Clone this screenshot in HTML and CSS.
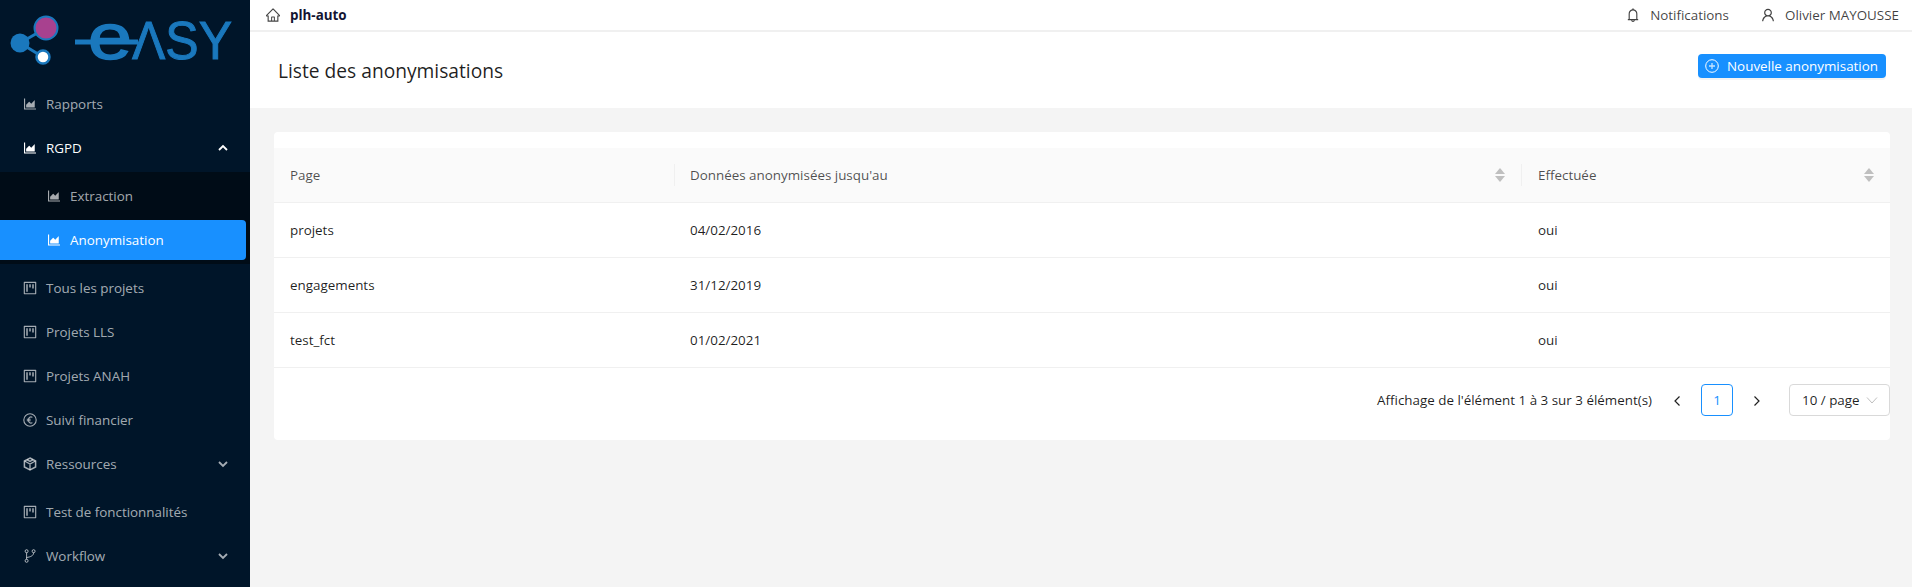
FILE: index.html
```html
<!DOCTYPE html>
<html lang="fr">
<head>
    <meta charset="UTF-8">
    <meta name="viewport" content="width=device-width, initial-scale=1.0">
    <title>Liste des anonymisations</title>
    <link rel="stylesheet" href="styles.css">
</head>
<body>
    <svg class="icon-defs" width="0" height="0">
        <symbol id="i-area" viewBox="64 64 896 896"><path d="M888 792H200V168c0-4.4-3.6-8-8-8h-56c-4.4 0-8 3.6-8 8v688c0 4.4 3.6 8 8 8h752c4.4 0 8-3.6 8-8v-56c0-4.4-3.6-8-8-8zm-616-64h536c4.4 0 8-3.6 8-8V284c0-7.2-8.7-10.7-13.7-5.7L592 488.6l-125.4-124a8.03 8.03 0 00-11.3 0l-189 189.6a7.87 7.87 0 00-2.3 5.6V720c0 4.4 3.6 8 8 8z"/></symbol>
        <symbol id="i-project" viewBox="64 64 896 896"><path d="M280 752h80c4.4 0 8-3.6 8-8V280c0-4.4-3.6-8-8-8h-80c-4.4 0-8 3.6-8 8v464c0 4.4 3.6 8 8 8zm192-280h80c4.4 0 8-3.6 8-8V280c0-4.4-3.6-8-8-8h-80c-4.4 0-8 3.6-8 8v184c0 4.4 3.6 8 8 8zm192 72h80c4.4 0 8-3.6 8-8V280c0-4.4-3.6-8-8-8h-80c-4.4 0-8 3.6-8 8v256c0 4.4 3.6 8 8 8zm216-432H144c-17.7 0-32 14.3-32 32v736c0 17.7 14.3 32 32 32h736c17.7 0 32-14.3 32-32V144c0-17.7-14.3-32-32-32zm-40 728H184V184h656v656z"/></symbol>
        <symbol id="i-chevron" viewBox="0 0 12 12"><path d="M2 4l4 4 4-4" fill="none" stroke="currentColor" stroke-width="1.8"/></symbol>
    </svg>

    <div class="layout">
        <!-- Menu -->
        <aside class="sider">
            <div class="logo">
                <svg width="250" height="80" viewBox="0 0 250 80">
                    <path d="M20 43L46 28M20 43L43 57" stroke="#1a78bd" stroke-width="3"/>
                    <circle cx="20" cy="43" r="9.5" fill="#1a78bd"/>
                    <circle cx="46" cy="28" r="11.5" fill="#a8418f" stroke="#1a78bd" stroke-width="2"/>
                    <circle cx="43" cy="57" r="6.5" fill="#fff" stroke="#1a78bd" stroke-width="2.5"/>
                    <text class="logo-text logo-e" x="88" y="59" textLength="44" lengthAdjust="spacingAndGlyphs">e</text>
                    <text class="logo-text" x="132" y="59" textLength="100" lengthAdjust="spacingAndGlyphs">ΛSY</text>
                    <path d="M75 42H138" stroke="#1a78bd" stroke-width="5"/>
                </svg>
            </div>
            <nav class="menu">
                <a class="menu-item"><svg class="icon"><use href="#i-area"/></svg>Rapports</a>
                <a class="menu-item is-open"><svg class="icon"><use href="#i-area"/></svg>RGPD<svg class="chevron up"><use href="#i-chevron"/></svg></a>
                <div class="submenu">
                    <a class="menu-item sub"><svg class="icon"><use href="#i-area"/></svg>Extraction</a>
                    <a class="menu-item sub is-active"><svg class="icon"><use href="#i-area"/></svg>Anonymisation</a>
                </div>
                <a class="menu-item"><svg class="icon"><use href="#i-project"/></svg>Tous les projets</a>
                <a class="menu-item"><svg class="icon"><use href="#i-project"/></svg>Projets LLS</a>
                <a class="menu-item"><svg class="icon"><use href="#i-project"/></svg>Projets ANAH</a>
                <a class="menu-item">
                    <svg class="icon" viewBox="0 0 14 14"><circle cx="7" cy="7" r="6.2" fill="none" stroke="currentColor" stroke-width="1.1"/><path d="M9.4 4.4C7.6 3.2 5.4 4.2 5.4 7s2.2 3.8 4 2.6M3.8 6.2h3.8M3.8 7.8h3.8" fill="none" stroke="currentColor" stroke-width="1.1"/></svg>
                    Suivi financier</a>
                <a class="menu-item">
                    <svg class="icon" viewBox="0 0 14 14"><path d="M7 1l5.6 3v6L7 13l-5.6-3V4z" fill="none" stroke="currentColor" stroke-width="1.5"/><path d="M1.6 4L7 7l5.4-3M7 7v6M4 2.6L7 4.4l3-1.8" fill="none" stroke="currentColor" stroke-width="1.3"/></svg>
                    Ressources<svg class="chevron"><use href="#i-chevron"/></svg></a>
                <a class="menu-item after-sub"><svg class="icon"><use href="#i-project"/></svg>Test de fonctionnalités</a>
                <a class="menu-item">
                    <svg class="icon" viewBox="0 0 14 14"><circle cx="3.6" cy="2.2" r="1.5" fill="none" stroke="currentColor"/><circle cx="3.6" cy="11.8" r="1.5" fill="none" stroke="currentColor"/><circle cx="10.6" cy="2.2" r="1.5" fill="none" stroke="currentColor"/><path d="M3.6 3.7v6.6M10.6 3.7c0 3.2-3.4 4.3-7 4.8" fill="none" stroke="currentColor"/></svg>
                    Workflow<svg class="chevron"><use href="#i-chevron"/></svg></a>
            </nav>
        </aside>

        <div class="main">
            <header class="topbar">
                <svg class="icon top-home" viewBox="64 64 896 896"><path d="M946.5 505L560.1 118.8l-25.9-25.9a31.5 31.5 0 00-44.4 0L77.5 505a63.9 63.9 0 00-18.8 46c.4 35.2 29.7 63.3 64.9 63.3h42.5V940h691.8V614.3h43.4c17.1 0 33.2-6.7 45.3-18.8a63.6 63.6 0 0018.7-45.3c0-17-6.7-33.1-18.8-45.2zM568 868H456V664h112v204zm217.9-325.7V868H632V640c0-22.1-17.9-40-40-40H432c-22.1 0-40 17.9-40 40v228H238.1V542.3h-96l370-369.7 23.1 23.1L882 542.3h-96.1z"/></svg>
                <strong class="app-name">plh-auto</strong>
                <div class="top-right">
                    <span class="top-link">
                        <svg class="icon" viewBox="64 64 896 896"><path d="M816 768h-24V428c0-141.1-104.3-257.7-240-277.1V112c0-22.1-17.9-40-40-40s-40 17.9-40 40v38.9c-135.7 19.4-240 136-240 277.1v340h-24c-17.7 0-32 14.3-32 32v32c0 4.4 3.6 8 8 8h216c0 61.8 50.2 112 112 112s112-50.2 112-112h216c4.4 0 8-3.6 8-8v-32c0-17.7-14.3-32-32-32zM512 888c-26.5 0-48-21.5-48-48h96c0 26.5-21.5 48-48 48zM304 768V428c0-55.6 21.6-107.8 60.9-147.1S456.4 220 512 220c55.6 0 107.8 21.6 147.1 60.9S720 372.4 720 428v340H304z"/></svg>
                        Notifications</span>
                    <span class="top-link">
                        <svg class="icon" viewBox="64 64 896 896"><path d="M858.5 763.6a374 374 0 00-80.6-119.5 375.63 375.63 0 00-119.5-80.6c-.4-.2-.8-.3-1.2-.5C719.5 518 760 444.7 760 362c0-137-111-248-248-248S264 225 264 362c0 82.7 40.5 156 102.8 201.1-.4.2-.8.3-1.2.5-44.8 18.9-85 46-119.5 80.6a375.63 375.63 0 00-80.6 119.5A371.7 371.7 0 00136 901.8a8 8 0 008 8.2h60c4.4 0 8-3.6 8-7.8 2-77.2 33-149.5 87.8-204.3 56.7-56.7 132-87.9 212.2-87.9s155.5 31.2 212.2 87.9C779 752.7 810 825 812 902.2c.1 4.4 3.6 7.8 8 7.8h60a8 8 0 008-8.2c-1-47.8-10.9-94.3-29.5-138.2zM512 534c-45.9 0-89.1-17.9-121.6-50.4S340 407.9 340 362c0-45.9 17.9-89.1 50.4-121.6S466.1 190 512 190s89.1 17.9 121.6 50.4S684 316.1 684 362c0 45.9-17.9 89.1-50.4 121.6S557.9 534 512 534z"/></svg>
                        Olivier MAYOUSSE</span>
                </div>
            </header>

            <div class="page-header">
                <h1>Liste des anonymisations</h1>
                <button class="btn-primary">
                    <svg class="icon" viewBox="0 0 14 14"><circle cx="7" cy="7" r="6.3" fill="none" stroke="currentColor" stroke-width="1"/><path d="M7 4v6M4 7h6" stroke="currentColor" stroke-width="1.3" opacity=".75"/></svg>
                    Nouvelle anonymisation
                </button>
            </div>

            <div class="content">
                <section class="card">
                    <table class="table">
                        <thead>
                            <tr>
                                <th class="col-page"><span class="th-label">Page</span></th>
                                <th class="col-date"><span class="th-label">Données anonymisées jusqu'au<span class="sorter"></span></span></th>
                                <th><span class="th-label">Effectuée<span class="sorter"></span></span></th>
                            </tr>
                        </thead>
                        <tbody>
                            <tr><td>projets</td><td>04/02/2016</td><td>oui</td></tr>
                            <tr><td>engagements</td><td>31/12/2019</td><td>oui</td></tr>
                            <tr><td>test_fct</td><td>01/02/2021</td><td>oui</td></tr>
                        </tbody>
                    </table>
                    <div class="pagination">
                        <span class="total">Affichage de l'élément 1 à 3 sur 3 élément(s)</span>
                        <svg class="page-arrow prev" viewBox="0 0 12 12"><path d="M8.5 1.5L4 6l4.5 4.5" fill="none" stroke="currentColor" stroke-width="1.2"/></svg>
                        <span class="page-current">1</span>
                        <svg class="page-arrow next" viewBox="0 0 12 12"><path d="M3.5 1.5L8 6l-4.5 4.5" fill="none" stroke="currentColor" stroke-width="1.2"/></svg>
                        <span class="page-size">10 / page<svg class="select-arrow" viewBox="0 0 12 12"><path d="M1 3.5l5 5.5 5-5.5" fill="none" stroke="currentColor"/></svg></span>
                    </div>
                </section>
            </div>
        </div>
    </div>
</body>
</html>
```

FILE: styles.css
```css
* {
    margin: 0;
    padding: 0;
    box-sizing: border-box;
}

body {
    font-family: "Open Sans", "Noto Sans", sans-serif;
    font-size: 13.4px;
    color: rgba(0, 0, 0, 0.88);
    background: #f4f4f4;
    overflow: hidden;
}

.icon-defs {
    position: absolute;
}

.layout {
    display: flex;
    height: 587px;
}

.icon {
    width: 14px;
    height: 14px;
    fill: currentColor;
    flex: none;
}

/* Menu */
.sider {
    width: 250px;
    flex: none;
    background: #001529;
    color: rgba(255, 255, 255, 0.65);
}

.logo {
    height: 84px;
}

.logo svg {
    display: block;
}

.logo-text {
    font-family: "Liberation Sans", sans-serif;
    font-size: 53px;
    fill: #1a78bd;
    stroke: #1a78bd;
    stroke-width: 1px;
}

.logo-e {
    font-size: 64px;
    stroke-width: 1.5px;
}

.menu {
    display: flex;
    flex-direction: column;
    gap: 4px;
}

.menu-item {
    display: flex;
    align-items: center;
    gap: 9px;
    height: 40px;
    padding-left: 23px;
    padding-right: 21px;
}

.menu-item.sub {
    padding-left: 47px;
}

.menu-item.after-sub {
    margin-top: 4px;
}

.menu-item.is-open {
    color: #fff;
}

.menu-item.is-active {
    background: #1890ff;
    color: #fff;
    width: 246px;
    border-radius: 0 4px 4px 0;
}

.submenu {
    display: flex;
    flex-direction: column;
    gap: 4px;
    padding: 4px 0;
    background: #000c17;
}

.chevron {
    width: 12px;
    height: 12px;
    margin-left: auto;
}

.chevron.up {
    transform: rotate(180deg);
}

/* Top bar */
.main {
    flex: 1;
    min-width: 0;
    display: flex;
    flex-direction: column;
}

.topbar {
    display: flex;
    align-items: center;
    height: 32px;
    padding: 0 13px 0 16px;
    background: #fff;
    border-bottom: 2px solid #f0f0f0;
}

.top-home {
    color: #444;
    margin-right: 10px;
}

.app-name {
    font-weight: 700;
    color: #141432;
}

.top-right {
    display: flex;
    gap: 32px;
    margin-left: auto;
}

.top-link {
    display: flex;
    align-items: center;
    gap: 10px;
    color: rgba(0, 0, 0, 0.75);
}

/* Page header */
.page-header {
    display: flex;
    justify-content: space-between;
    align-items: flex-start;
    height: 76px;
    padding: 22px 26px 0 28px;
    background: #fff;
}

h1 {
    font-size: 19.2px;
    font-weight: 500;
    line-height: 28px;
    margin-top: 3px;
}

.btn-primary {
    display: flex;
    align-items: center;
    gap: 8px;
    height: 24px;
    padding: 0 8px 0 7px;
    font: inherit;
    color: #fff;
    background: #1890ff;
    border: none;
    border-radius: 4px;
    box-shadow: 0 2px 0 rgba(0, 0, 0, 0.045);
}

/* Table */
.content {
    padding: 24px 22px 0 24px;
}

.card {
    height: 308px;
    padding-top: 16px;
    background: #fff;
    border-radius: 4px;
}

.table {
    width: 100%;
    border-collapse: collapse;
    table-layout: fixed;
}

.col-page {
    width: 400px;
}

.col-date {
    width: 847px;
}

th {
    height: 54px;
    padding: 0 16px;
    font-weight: 500;
    text-align: left;
    color: rgba(0, 0, 0, 0.7);
    background: #fafafa;
    border-bottom: 1px solid #f0f0f0;
    position: relative;
}

th + th::before {
    content: "";
    position: absolute;
    left: 0;
    top: 16px;
    height: 22px;
    width: 1px;
    background: #f0f0f0;
}

.th-label {
    display: flex;
    align-items: center;
    justify-content: space-between;
}

.sorter {
    display: flex;
    flex-direction: column;
    gap: 2px;
    width: 10px;
}

.sorter::before,
.sorter::after {
    content: "";
    border-left: 5px solid transparent;
    border-right: 5px solid transparent;
}

.sorter::before {
    border-bottom: 6px solid #bfbfbf;
}

.sorter::after {
    border-top: 6px solid #bfbfbf;
}

td {
    height: 55px;
    padding: 0 16px;
    border-bottom: 1px solid #f0f0f0;
}

td:last-child,
th:last-child {
    padding-left: 17px;
}

/* Pagination */
.pagination {
    display: flex;
    align-items: center;
    justify-content: flex-end;
    margin-top: 16px;
    height: 32px;
}

.page-arrow {
    width: 12px;
    height: 12px;
    margin-top: 2px;
}

.page-arrow.prev {
    margin-left: 19px;
    margin-right: 18px;
}

.page-arrow.next {
    margin-left: 18px;
    margin-right: 26px;
}

.page-current {
    width: 32px;
    height: 32px;
    line-height: 30px;
    text-align: center;
    color: #1890ff;
    border: 1px solid #1890ff;
    border-radius: 4px;
}

.page-size {
    display: flex;
    align-items: center;
    justify-content: space-between;
    width: 101px;
    height: 32px;
    padding: 0 11px 0 12px;
    border: 1px solid #d9d9d9;
    border-radius: 4px;
}

.select-arrow {
    width: 12px;
    height: 12px;
    color: #bfbfbf;
}
```
